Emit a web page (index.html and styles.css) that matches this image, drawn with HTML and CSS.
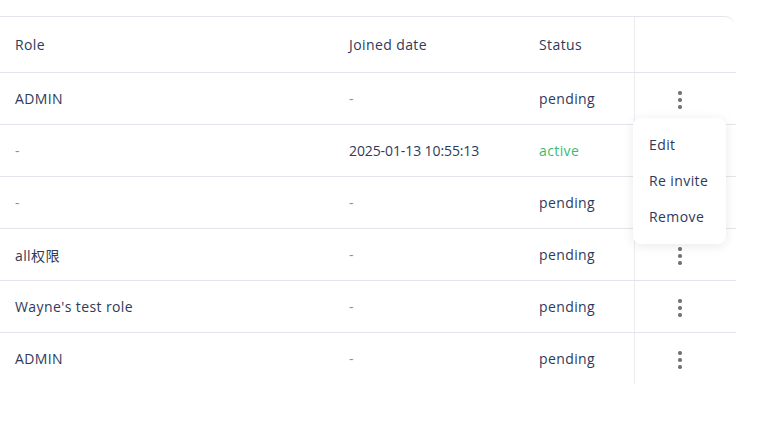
FILE: index.html
```html
<!DOCTYPE html>
<html lang="en">
<head>
  <meta charset="UTF-8">
  <title>Members</title>
  <link rel="stylesheet" href="styles.css">
</head>
<body>

  <div class="card">
    <table class="members">
      <thead>
        <tr>
          <th class="col-role">Role</th>
          <th class="col-date">Joined date</th>
          <th class="col-status">Status</th>
          <th class="col-action"></th>
        </tr>
      </thead>
      <tbody>
        <tr>
          <td>ADMIN</td>
          <td class="empty">-</td>
          <td>pending</td>
          <td class="col-action">
            <span class="kebab"><i></i><i></i><i></i></span>
            <ul class="menu">
              <li>Edit</li>
              <li>Re invite</li>
              <li>Remove</li>
            </ul>
          </td>
        </tr>
        <tr>
          <td class="empty">-</td>
          <td class="date">2025-01-13 10:55:13</td>
          <td class="active">active</td>
          <td class="col-action"><span class="kebab"><i></i><i></i><i></i></span></td>
        </tr>
        <tr>
          <td class="empty">-</td>
          <td class="empty">-</td>
          <td>pending</td>
          <td class="col-action"><span class="kebab"><i></i><i></i><i></i></span></td>
        </tr>
        <tr>
          <td>all权限</td>
          <td class="empty">-</td>
          <td>pending</td>
          <td class="col-action"><span class="kebab"><i></i><i></i><i></i></span></td>
        </tr>
        <tr>
          <td>Wayne's test role</td>
          <td class="empty">-</td>
          <td>pending</td>
          <td class="col-action"><span class="kebab"><i></i><i></i><i></i></span></td>
        </tr>
        <tr>
          <td>ADMIN</td>
          <td class="empty">-</td>
          <td>pending</td>
          <td class="col-action"><span class="kebab"><i></i><i></i><i></i></span></td>
        </tr>
      </tbody>
    </table>
  </div>

</body>
</html>
```

FILE: styles.css
```css
body {
  margin: 0;
  background-color: #fff;
  font-family: "Open Sans", "Noto Sans CJK SC", sans-serif;
  font-size: 14px;
  letter-spacing: 0.4px;
  color: #2f3a5a;
}
.card {
  margin-top: 16px;
  width: 735px;
  border-top: 1px solid #e4e4ec;
  border-top-right-radius: 10px;
}
.members {
  width: 735px;
  border-collapse: collapse;
  table-layout: fixed;
}
.members th,
.members td {
  text-align: left;
  padding: 0 0 0 15px;
  white-space: nowrap;
}
.members th {
  height: 55px;
  font-weight: 500;
  border-bottom: 1px solid #e4e4ec;
}
.members td {
  height: 51px;
  border-bottom: 1px solid #e4e4ec;
}
.members tbody tr:last-child td {
  border-bottom: none;
}
.col-role { width: 319px; }
.col-date { width: 175px; }
.col-status { width: 95px; }
.members .col-action {
  width: 90px;
  padding: 0 11px 0 0;
  position: relative;
  border-left: 1px solid #ececf0;
  box-shadow: -3px 0 4px -2px rgba(0, 0, 0, 0.08);
  text-align: center;
}
.empty { color: #8a90a2; }
.active { color: #3dbb72; }
.date { letter-spacing: -0.1px; }
.kebab {
  display: inline-flex;
  flex-direction: column;
  gap: 3.5px;
  vertical-align: middle;
}
.kebab i {
  display: block;
  width: 3.5px;
  height: 3.5px;
  border-radius: 50%;
  background-color: #737373;
}
.menu {
  position: absolute;
  left: -2px;
  top: 45px;
  z-index: 2;
  width: 93px;
  margin: 0;
  padding: 9px 0;
  list-style: none;
  text-align: left;
  background-color: #fff;
  border-radius: 8px;
  box-shadow: 0 2px 12px rgba(0, 0, 0, 0.09);
}
.menu li {
  height: 36px;
  line-height: 36px;
  padding-left: 16px;
}
```
